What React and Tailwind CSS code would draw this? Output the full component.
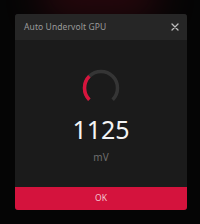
export default function App() {
  return (
    <div
      className="relative w-[200px] h-[224px] overflow-hidden bg-[#050505] pt-[14px] pl-[15px]"
      style={{ fontFamily: '"Noto Sans", "Open Sans", sans-serif' }}
    >
      <div className="absolute left-[40px] top-[-30px] w-[120px] h-[50px] rounded-full bg-[#5a0a18] opacity-40 blur-[18px]" />
      <div className="relative w-[172px] rounded-[3px] overflow-hidden bg-[#1b1b1b] flex flex-col">
        <div className="h-[26px] bg-[#262626] flex items-center justify-between pl-[9px] pr-[6px]">
          <span className="text-[8.5px] text-[#9a9a9a] tracking-[0.1px]">Auto Undervolt GPU</span>
          <svg width="10" height="10" viewBox="0 0 10 10" className="mr-[1px]">
            <path d="M2 2 L8 8 M8 2 L2 8" stroke="#bdbdbd" strokeWidth="1.3" strokeLinecap="round" />
          </svg>
        </div>
        <div className="h-[147px] flex flex-col items-center pt-[28px]">
          <svg width="40" height="40" viewBox="0 0 40 40">
            <path d="M8.33 31.67 A16.5 16.5 0 1 1 31.67 31.67" fill="none" stroke="#353535" strokeWidth="3.5" />
            <path d="M8.33 31.67 A16.5 16.5 0 0 1 8.33 8.33" fill="none" stroke="#d8143d" strokeWidth="3.5" />
          </svg>
          <div className="mt-[9px] text-[25px] leading-none text-[#f4f4f4]">1125</div>
          <div className="mt-[10px] text-[10px] leading-none text-[#6e6e6e]">mV</div>
        </div>
        <button className="h-[23px] bg-[#d4133d] text-[8.5px] text-[#f3c7d0] flex items-center justify-center">
          OK
        </button>
      </div>
    </div>
  );
}
